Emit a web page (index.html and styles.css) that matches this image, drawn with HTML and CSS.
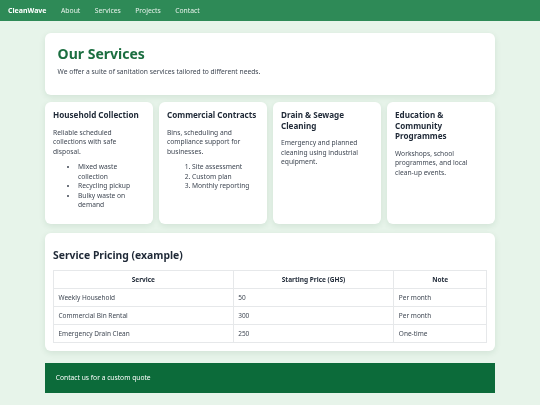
FILE: index.html
```html
<!DOCTYPE html>
<html lang="en">
<head>
<meta charset="utf-8">
<title>CleanWave — Services</title>
<link rel="stylesheet" href="styles.css">
</head>
<body>
<nav class="nav">
  <span class="brand">CleanWave</span>
  <a class="nav-link" href="#">About</a>
  <a class="nav-link" href="#">Services</a>
  <a class="nav-link" href="#">Projects</a>
  <a class="nav-link" href="#">Contact</a>
</nav>
<main class="container">
  <section class="card hero">
    <h1 class="hero-title">Our Services</h1>
    <p class="hero-sub">We offer a suite of sanitation services tailored to different needs.</p>
  </section>
  <section class="grid">
    <article class="card svc">
      <h3 class="svc-title">Household Collection</h3>
      <p class="svc-text">Reliable scheduled collections with safe disposal.</p>
      <ul class="svc-list">
        <li>Mixed waste collection</li>
        <li>Recycling pickup</li>
        <li>Bulky waste on demand</li>
      </ul>
    </article>
    <article class="card svc">
      <h3 class="svc-title">Commercial Contracts</h3>
      <p class="svc-text">Bins, scheduling and compliance support for businesses.</p>
      <ol class="svc-list">
        <li>Site assessment</li>
        <li>Custom plan</li>
        <li>Monthly reporting</li>
      </ol>
    </article>
    <article class="card svc">
      <h3 class="svc-title">Drain &amp; Sewage Cleaning</h3>
      <p class="svc-text">Emergency and planned cleaning using industrial equipment.</p>
    </article>
    <article class="card svc">
      <h3 class="svc-title">Education &amp; Community Programmes</h3>
      <p class="svc-text">Workshops, school programmes, and local clean-up events.</p>
    </article>
  </section>
  <section class="card pricing">
    <h2 class="pricing-title">Service Pricing (example)</h2>
    <table class="table">
      <colgroup>
        <col class="c1"><col class="c2"><col class="c3">
      </colgroup>
      <thead>
        <tr><th>Service</th><th>Starting Price (GHS)</th><th>Note</th></tr>
      </thead>
      <tbody>
        <tr><td>Weekly Household</td><td>50</td><td>Per month</td></tr>
        <tr><td>Commercial Bin Rental</td><td>300</td><td>Per month</td></tr>
        <tr><td>Emergency Drain Clean</td><td>250</td><td>One-time</td></tr>
      </tbody>
    </table>
  </section>
  <footer class="footer">Contact us for a custom quote</footer>
</main>
</body>
</html>
```
FILE: styles.css
```css
* { box-sizing: border-box; }
html, body { margin: 0; padding: 0; }
body {
  font-family: "Noto Sans", "Open Sans", sans-serif;
  font-size: 6.7px;
  line-height: 9.4px;
  color: #3f4753;
  background: #e7f4ea;
  min-height: 405px;
  -webkit-font-smoothing: antialiased;
}
.nav {
  height: 21px;
  background: #2e8a57;
  display: flex;
  align-items: center;
  padding: 0 8px;
  gap: 14.5px;
  will-change: transform;
}
.brand {
  color: #ffffff;
  font-weight: 700;
  font-size: 7px;
}
.nav-link {
  color: #e8f3ec;
  text-decoration: none;
  font-size: 6.8px;
}
.container {
  width: 450px;
  margin: 12px auto 0;
  will-change: transform;
}
.card {
  background: #ffffff;
  border-radius: 6px;
  box-shadow: 0 2px 6px rgba(20, 80, 40, 0.10);
}
.hero {
  padding: 12.6px;
  height: 62px;
}
.hero-title {
  margin: 0 0 4.4px;
  font-size: 14px;
  line-height: 16.8px;
  font-weight: 700;
  color: #1b6e40;
}
.hero-sub {
  margin: 0;
}
.grid {
  margin-top: 7px;
  display: grid;
  grid-template-columns: repeat(4, 1fr);
  gap: 6px;
}
.svc {
  padding: 8px;
  min-height: 122px;
}
.svc-title {
  margin: 0 0 7.3px;
  font-size: 8.1px;
  line-height: 10.6px;
  font-weight: 700;
  color: #1f2937;
}
.svc-text {
  margin: 0;
}
.svc-list {
  margin: 6.3px 0 0;
  padding-left: 25px;
}
.pricing {
  margin-top: 9px;
  padding: 7.8px 8px 8px;
}
.pricing-title {
  margin: 0 0 8.8px;
  padding-top: 7.8px;
  font-size: 10.4px;
  line-height: 12.5px;
  font-weight: 700;
  color: #1f2937;
}
.table {
  width: 100%;
  border-collapse: collapse;
}
.c1 { width: 41.5%; }
.c2 { width: 37.1%; }
.c3 { width: 21.4%; }
.table th, .table td {
  border: 1px solid #e6e8ea;
  padding: 3.8px 4.5px;
  text-align: left;
  font-size: 6.5px;
  line-height: 9.4px;
}
.table th {
  text-align: center;
  font-weight: 700;
  color: #1f2937;
}
.footer {
  margin-top: 12px;
  background: #0c6b3a;
  color: #ffffff;
  padding: 10.3px 10.8px;
  height: 30px;
}
```
